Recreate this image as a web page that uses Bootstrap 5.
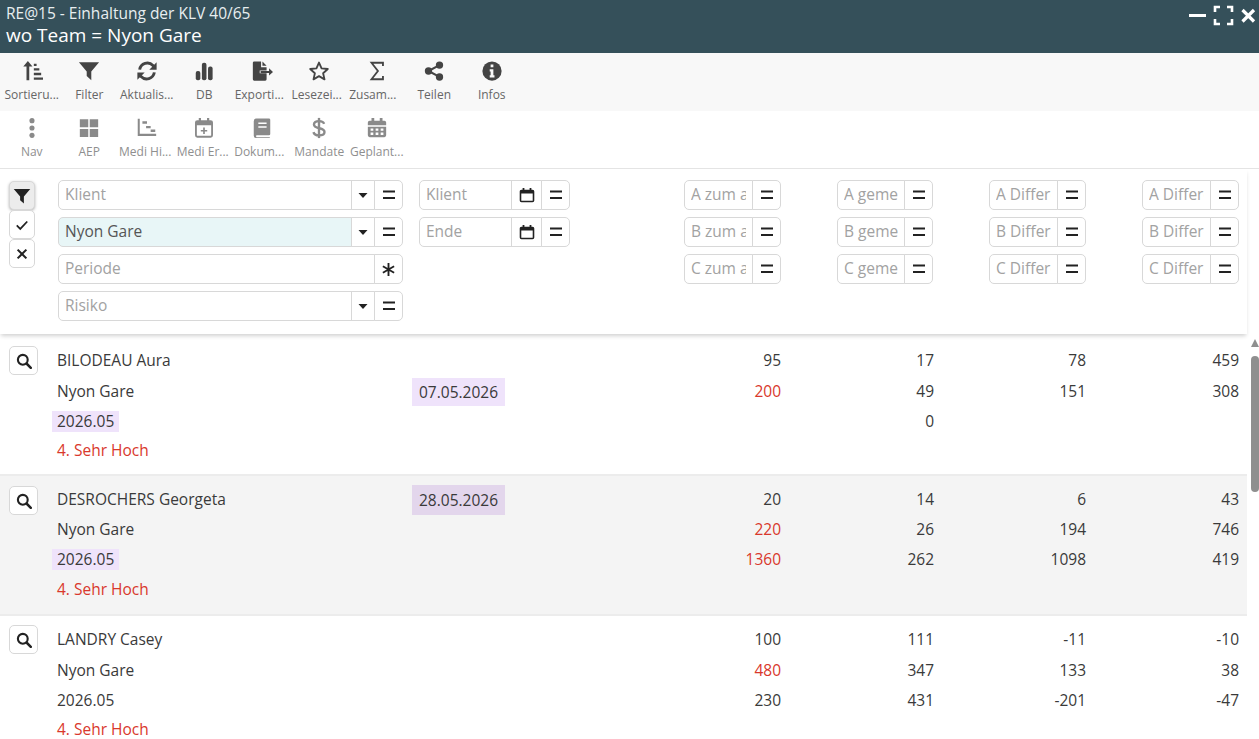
<!DOCTYPE html>
<html lang="de">
<head>
  <meta charset="UTF-8" />
  <meta name="viewport" content="width=device-width, initial-scale=1" />
  <title>RE@15 - Einhaltung der KLV 40/65</title>
  <link href="https://cdn.jsdelivr.net/npm/bootstrap@5.3.3/dist/css/bootstrap.min.css" rel="stylesheet" />
  <style>
    html, body { height: 739px; overflow: hidden; }
    body { font-family: "Open Sans", "Liberation Sans", sans-serif; font-size: 15.5px; color: #3a3a3a; background: #fff; }

    /* title bar */
    .titlebar { height: 53px; background: #35505a; color: #fff; padding: 5px 1px 0 6px; }
    .tb-sub { font-size: 15.5px; line-height: 17px; color: #e8eef0; }
    .tb-main { font-size: 19px; line-height: 26px; }
    .win-btns { color: #fff; }

    /* toolbars */
    .tool-row { height: 58px; padding: 7px 0 0 3px; }
    .tool-one { background: #f8f8f8; color: #444; }
    .tool-two { background: #fff; color: #8a8a8a; height: 58px; border-bottom: 1px solid #e4e4e4; padding-top: 6px; }
    .tool-item { width: 57.5px; flex: none; text-align: center; }
    .tool-item svg { display: block; margin: 0 auto; width: 22px; height: 22px; }
    .tool-lbl { font-size: 12px; line-height: 16px; margin: 5px -4px 0; white-space: nowrap; }
    .tool-two .tool-lbl { color: #8f8f8f; }
    .tool-one .tool-lbl { color: #666; }
    .tool-lbl.lft-1 { margin-left: -5.5px; margin-right: -2.5px; }
    .tool-lbl.lft-2 { margin-left: -6.5px; margin-right: -1.5px; }
    .tool-lbl.lft-4 { margin-left: -8px; margin-right: 0; }

    /* filter panel */
    .filter-panel { width: 1247px; height: 165px; padding: 11px 0 0 9px; background: #fff; box-shadow: 0 3px 4px -1px rgba(0, 0, 0, .18); position: relative; z-index: 1; }
    .side-btns { width: 26px; margin-right: 23px; padding-top: 1px; }
    .side-btn { width: 26px; height: 29px; display: flex; align-items: center; justify-content: center; background: #fff; border: 1px solid #d8d8d8; border-radius: 5px; color: #222; }
    .side-btn.on { background: #ececec; box-shadow: 0 1px 3px rgba(0, 0, 0, .3); }
    .flt-col { gap: 7px; }
    .flt { height: 30px; flex-wrap: nowrap; }
    .flt .form-control { height: 30px; min-width: 0; padding: 0 6px 2px; font-size: 15.5px; color: #555; border-color: #d8d8d8; border-radius: 5px 0 0 5px; box-shadow: none; }
    .flt .form-control::placeholder { color: #a2a2a2; }
    .flt .form-control.is-set { background: #e8f6f7; }
    .flt-btn { flex: none; width: 29px; height: 30px; padding: 0; display: flex; align-items: center; justify-content: center; background: #fff; border: 1px solid #d8d8d8; margin-left: -1px; color: #222; }
    .flt-btn.narrow { width: 24px; }
    .flt-btn.wide { width: 31px; }
    .flt-btn:last-child { border-radius: 0 5px 5px 0; }
    .col-a { width: 345px; }
    .col-b { width: 151px; margin-left: 16px; }
    .col-n { width: 97px; margin-left: 56px; }
    .col-n.first { margin-left: 114px; }
    .col-n.thin { width: 96px; }
    .num-cell .form-control { flex: 1 1 0; }

    /* list */
    .data-wrap { height: 405px; }
    .data-list { width: 1247px; flex: none; overflow: hidden; }
    .data-row { display: grid; grid-template-columns: 57px 362px 151px 211px 153px 152px 153px; grid-template-rows: 33px 30px 30px 28px; padding: 10px 0 0; height: 142px; border-bottom: 2px solid #ececec; align-items: center; }
    .data-row.shade { background: #f4f4f4; height: 140px; padding-top: 9px; grid-template-rows: repeat(4, 30px); }
    .data-row.last { border-bottom: 0; padding-top: 7px; height: 130px; }
    .data-row > .r { text-align: right; }
    .red-txt { color: #d9382c; }
    .search-cell { grid-row: 1 / span 4; align-self: start; padding: 2px 0 0 9px; }
    .shade .search-cell { padding-top: 1px; }
    .search-btn { width: 29px; height: 29px; display: flex; align-items: center; justify-content: center; background: #fff; border: 1px solid #d8d8d8; border-radius: 5px; color: #222; }
    .hl { display: inline-block; background: #efe3fb; line-height: 21px; padding: 0 5px; margin-left: -5px; }
    .hl-date { line-height: 28px; padding: 0 7px; margin-left: -7px; }
    .shade .hl-date { background: #e3d6ec; line-height: 30px; }
    .scroll-col { width: 12px; padding: 5px 0 0 4px; }
    .scroll-up { width: 0; height: 0; border-left: 4px solid transparent; border-right: 4px solid transparent; border-bottom: 8px solid #8f8f8f; margin-bottom: 9px; }
    .scroll-thumb { width: 8px; height: 136px; background: #8f8f8f; border-radius: 4px; }
  </style>
</head>
<body>

  <!-- ICONS -->
  <svg width="0" height="0" class="d-block" aria-hidden="true">
    <symbol id="i-eq" viewBox="0 0 16 16"><path d="M2 4.500h12M2 11h12" stroke="currentColor" stroke-width="2" fill="none"/></symbol>
    <symbol id="i-caret" viewBox="0 0 16 16"><path d="M3.500 6h9L8 11z" fill="currentColor"/></symbol>
    <symbol id="i-cal" viewBox="0 0 16 16"><path d="M2.500 3.500h11a1 1 0 0 1 1 1v9a1 1 0 0 1-1 1h-11a1 1 0 0 1-1-1v-9a1 1 0 0 1 1-1z" fill="none" stroke="currentColor" stroke-width="1.600"/><path d="M1.500 3.500h13V6.500h-13z" fill="currentColor"/><path d="M4.500 1v3M11.500 1v3" stroke="currentColor" stroke-width="1.800"/></symbol>
    <symbol id="i-search" viewBox="0 0 16 16"><circle cx="6.800" cy="6.800" r="4.900" fill="none" stroke="currentColor" stroke-width="2.100"/><path d="M10.500 10.500l4.300 4.300" stroke="currentColor" stroke-width="2.500" stroke-linecap="round"/></symbol>
    <symbol id="i-filter" viewBox="0 0 24 24"><path d="M1 2.500h22l-8.500 10v9.500l-5-4.500v-5z" fill="currentColor"/></symbol>
  </svg>

  <!-- TITLE -->
  <header class="titlebar d-flex justify-content-between">
    <div>
      <div class="tb-sub">RE@15 - Einhaltung der KLV 40/65</div>
      <div class="tb-main">wo Team = Nyon Gare</div>
    </div>
    <div class="win-btns d-flex align-items-start">
      <svg width="70" height="22" viewBox="0 0 70 22" fill="none" stroke="currentColor">
        <path d="M1 10.500h17" stroke-width="3"/>
        <path d="M27 7V2h5M39 2h5v5M44 14v5h-5M32 19h-5v-5" stroke-width="2.600"/>
        <path d="M54.500 5l11.500 11.500M66 5L54.500 16.500" stroke-width="3.200"/>
      </svg>
    </div>
  </header>

  <!-- TOOLBAR 1 -->
  <div class="tool-row tool-one d-flex">
    <div class="tool-item">
      <svg viewBox="0 0 24 24" fill="currentColor"><path d="M6 22V7H2.500L7.500 1l5 6H9v15z"/><path d="M14 4h3v2.500h-3zM14 9h6v2.500h-6zM14 14h8v2.500h-8zM14 19h10v2.500H14z"/></svg>
      <div class="tool-lbl">Sortieru...</div>
    </div>
    <div class="tool-item">
      <svg><use href="#i-filter"/></svg>
      <div class="tool-lbl">Filter</div>
    </div>
    <div class="tool-item">
      <svg viewBox="0 0 24 24" fill="none" stroke="currentColor" stroke-width="3.200"><path d="M4 10.500a8.500 8.500 0 0 1 14.500-4.500l2 2"/><path d="M20 13.500a8.500 8.500 0 0 1-14.500 4.500l-2-2"/><path d="M22.500 2.500v8h-8z" fill="currentColor" stroke="none"/><path d="M1.500 21.500v-8h8z" fill="currentColor" stroke="none"/></svg>
      <div class="tool-lbl">Aktualis...</div>
    </div>
    <div class="tool-item">
      <svg viewBox="0 0 24 24" fill="currentColor"><rect x="3" y="12" width="5" height="10" rx="2.200"/><rect x="9.700" y="3" width="5" height="19" rx="2.200"/><rect x="16.400" y="7" width="5" height="15" rx="2.200"/></svg>
      <div class="tool-lbl">DB</div>
    </div>
    <div class="tool-item">
      <svg viewBox="0 0 24 24" fill="currentColor"><path d="M2 3a1.500 1.500 0 0 1 1.500-1.500H11V8h6v3.500H9.500v3H17V21a1.500 1.500 0 0 1-1.500 1.500h-12A1.500 1.500 0 0 1 2 21z"/><path d="M12.500 1.500L17 6.200h-4.500z"/><path d="M10.500 11.900h9.200V9l4.300 4-4.300 4v-2.900h-9.200z"/></svg>
      <div class="tool-lbl lft-2">Exporti...</div>
    </div>
    <div class="tool-item">
      <svg viewBox="0 0 24 24" fill="none" stroke="currentColor" stroke-width="2"><path d="M12 2.800l2.800 6.300 6.800.7-5.100 4.600 1.500 6.700-6-3.500-6 3.500 1.500-6.700-5.100-4.600 6.800-.7z" stroke-linejoin="round"/></svg>
      <div class="tool-lbl lft-2">Lesezei...</div>
    </div>
    <div class="tool-item">
      <svg viewBox="0 0 24 24" fill="none" stroke="currentColor" stroke-width="2"><path d="M18.500 6.500V3H6l7 9-7 9h12.500v-3.500"/></svg>
      <div class="tool-lbl lft-4">Zusam...</div>
    </div>
    <div class="tool-item">
      <svg viewBox="0 0 24 24" fill="currentColor"><circle cx="18" cy="5.500" r="4"/><circle cx="18" cy="18.500" r="4"/><circle cx="6" cy="12" r="4"/><path d="M6 12l12-6.500M6 12l12 6.500" stroke="currentColor" stroke-width="2.200"/></svg>
      <div class="tool-lbl">Teilen</div>
    </div>
    <div class="tool-item">
      <svg viewBox="0 0 24 24"><circle cx="12" cy="12" r="10.500" fill="currentColor"/><path d="M10.500 5h3v3h-3zM9.500 10h4v6.500h1.200V19H9.500v-2.500h1V12.500h-1z" fill="#f8f8f8"/></svg>
      <div class="tool-lbl">Infos</div>
    </div>
  </div>

  <!-- TOOLBAR 2 -->
  <div class="tool-row tool-two d-flex">
    <div class="tool-item">
      <svg viewBox="0 0 24 24" fill="currentColor"><circle cx="12" cy="4" r="2.800"/><circle cx="12" cy="12" r="2.800"/><circle cx="12" cy="20" r="2.800"/></svg>
      <div class="tool-lbl">Nav</div>
    </div>
    <div class="tool-item">
      <svg viewBox="0 0 24 24" fill="currentColor"><path d="M2 2.500h9.200v8.800H2zM12.800 2.500H22v8.800h-9.200zM2 13h9.200v8.800H2zM12.800 13H22v8.800h-9.200z"/></svg>
      <div class="tool-lbl">AEP</div>
    </div>
    <div class="tool-item">
      <svg viewBox="0 0 24 24" fill="none" stroke="currentColor"><path d="M3 2v17.500h19" stroke-width="2.200"/><path d="M7 6h5M11 11h5M16 15h5" stroke-width="2.600"/></svg>
      <div class="tool-lbl lft-1">Medi Hi...</div>
    </div>
    <div class="tool-item">
      <svg viewBox="0 0 24 24" fill="none" stroke="currentColor"><rect x="3.200" y="4.500" width="17.600" height="17" rx="1.500" stroke-width="2"/><path d="M3 5h18v4H3z" fill="currentColor" stroke="none"/><path d="M7.500 1v5M16.500 1v5" stroke-width="2.400"/><path d="M12 11.500v7M8.500 15h7" stroke-width="1.800"/></svg>
      <div class="tool-lbl lft-1">Medi Er...</div>
    </div>
    <div class="tool-item">
      <svg viewBox="0 0 24 24" fill="currentColor"><path d="M6 1.500h13.500a1.500 1.500 0 0 1 1.500 1.500v15.500a1.500 1.500 0 0 1-1.500 1.500H6a1.500 1.500 0 0 0 0 2h14.500v1H5.500A2.500 2.500 0 0 1 3 20.500V4.500a3 3 0 0 1 3-3z"/><path d="M8 6h9v1.600H8zM8 10h9v1.600H8z" fill="#fff"/></svg>
      <div class="tool-lbl lft-2">Dokum...</div>
    </div>
    <div class="tool-item">
      <svg viewBox="0 0 24 24" fill="none" stroke="currentColor" stroke-width="2.600"><path d="M17.500 7.500C17 5.500 15 4.500 12 4.500c-3.500 0-5.500 1.500-5.500 3.800 0 5.500 11.500 2.500 11.500 8 0 2.300-2.500 3.700-6 3.700-3.300 0-5.500-1.200-6-3.500"/><path d="M12 1v22"/></svg>
      <div class="tool-lbl">Mandate</div>
    </div>
    <div class="tool-item">
      <svg viewBox="0 0 24 24" fill="currentColor"><path d="M4 4h16a2 2 0 0 1 2 2v3H2V6a2 2 0 0 1 2-2zM6 1h3v4H6zM15 1h3v4h-3z"/><path fill-rule="evenodd" d="M2 10.500h20V20a2 2 0 0 1-2 2H4a2 2 0 0 1-2-2zM5 12.500v2.500h3v-2.500zM10.500 12.500v2.500h3v-2.500zM16 12.500v2.500h3v-2.500zM5 17v2.500h3V17zM10.500 17v2.500h3V17zM16 17v2.500h3V17z"/></svg>
      <div class="tool-lbl">Geplant...</div>
    </div>
  </div>

  <!-- FILTERS -->
  <section class="filter-panel d-flex">
    <div class="side-btns d-flex flex-column">
      <div class="side-btn on"><svg width="18" height="18"><use href="#i-filter"/></svg></div>
      <div class="side-btn"><svg width="14" height="14" viewBox="0 0 16 16" fill="none" stroke="currentColor" stroke-width="2"><path d="M2 8.500l4 4 8-8.500"/></svg></div>
      <div class="side-btn"><svg width="14" height="14" viewBox="0 0 16 16" fill="none" stroke="currentColor" stroke-width="2.400"><path d="M3 3l10 10M13 3L3 13"/></svg></div>
    </div>

    <div class="col-a flt-col d-flex flex-column">
      <div class="input-group flt"><input class="form-control" placeholder="Klient" /><div class="flt-btn narrow"><svg width="16" height="16"><use href="#i-caret"/></svg></div><div class="flt-btn"><svg width="16" height="16"><use href="#i-eq"/></svg></div></div>
      <div class="input-group flt"><input class="form-control is-set" value="Nyon Gare" /><div class="flt-btn narrow"><svg width="16" height="16"><use href="#i-caret"/></svg></div><div class="flt-btn"><svg width="16" height="16"><use href="#i-eq"/></svg></div></div>
      <div class="input-group flt"><input class="form-control" placeholder="Periode" /><div class="flt-btn"><svg width="15" height="15" viewBox="0 0 16 16" stroke="currentColor" stroke-width="2"><path d="M8 1v14M2 4.500l12 7M14 4.500l-12 7"/></svg></div></div>
      <div class="input-group flt"><input class="form-control" placeholder="Risiko" /><div class="flt-btn narrow"><svg width="16" height="16"><use href="#i-caret"/></svg></div><div class="flt-btn"><svg width="16" height="16"><use href="#i-eq"/></svg></div></div>
    </div>

    <div class="col-b flt-col d-flex flex-column">
      <div class="input-group flt"><input class="form-control" placeholder="Klient" /><div class="flt-btn wide"><svg width="16" height="16"><use href="#i-cal"/></svg></div><div class="flt-btn"><svg width="16" height="16"><use href="#i-eq"/></svg></div></div>
      <div class="input-group flt"><input class="form-control" placeholder="Ende" /><div class="flt-btn wide"><svg width="16" height="16"><use href="#i-cal"/></svg></div><div class="flt-btn"><svg width="16" height="16"><use href="#i-eq"/></svg></div></div>
    </div>

    <div class="col-n first flt-col num-cell d-flex flex-column">
      <div class="input-group flt"><input class="form-control" placeholder="A zum abgerechnet" /><div class="flt-btn"><svg width="16" height="16"><use href="#i-eq"/></svg></div></div>
      <div class="input-group flt"><input class="form-control" placeholder="B zum abgerechnet" /><div class="flt-btn"><svg width="16" height="16"><use href="#i-eq"/></svg></div></div>
      <div class="input-group flt"><input class="form-control" placeholder="C zum abgerechnet" /><div class="flt-btn"><svg width="16" height="16"><use href="#i-eq"/></svg></div></div>
    </div>
    <div class="col-n thin flt-col num-cell d-flex flex-column">
      <div class="input-group flt"><input class="form-control" placeholder="A gemeldet" /><div class="flt-btn"><svg width="16" height="16"><use href="#i-eq"/></svg></div></div>
      <div class="input-group flt"><input class="form-control" placeholder="B gemeldet" /><div class="flt-btn"><svg width="16" height="16"><use href="#i-eq"/></svg></div></div>
      <div class="input-group flt"><input class="form-control" placeholder="C gemeldet" /><div class="flt-btn"><svg width="16" height="16"><use href="#i-eq"/></svg></div></div>
    </div>
    <div class="col-n flt-col num-cell d-flex flex-column">
      <div class="input-group flt"><input class="form-control" placeholder="A Differenz" /><div class="flt-btn"><svg width="16" height="16"><use href="#i-eq"/></svg></div></div>
      <div class="input-group flt"><input class="form-control" placeholder="B Differenz" /><div class="flt-btn"><svg width="16" height="16"><use href="#i-eq"/></svg></div></div>
      <div class="input-group flt"><input class="form-control" placeholder="C Differenz" /><div class="flt-btn"><svg width="16" height="16"><use href="#i-eq"/></svg></div></div>
    </div>
    <div class="col-n flt-col num-cell d-flex flex-column">
      <div class="input-group flt"><input class="form-control" placeholder="A Differenz" /><div class="flt-btn"><svg width="16" height="16"><use href="#i-eq"/></svg></div></div>
      <div class="input-group flt"><input class="form-control" placeholder="B Differenz" /><div class="flt-btn"><svg width="16" height="16"><use href="#i-eq"/></svg></div></div>
      <div class="input-group flt"><input class="form-control" placeholder="C Differenz" /><div class="flt-btn"><svg width="16" height="16"><use href="#i-eq"/></svg></div></div>
    </div>
  </section>

  <!-- LIST -->
  <div class="data-wrap d-flex">
    <div class="data-list">

      <div class="data-row">
        <div class="search-cell"><div class="search-btn"><svg width="16" height="16"><use href="#i-search"/></svg></div></div>
        <div>BILODEAU Aura</div><div></div><div class="r">95</div><div class="r">17</div><div class="r">78</div><div class="r">459</div>
        <div>Nyon Gare</div><div><span class="hl hl-date">07.05.2026</span></div><div class="r red-txt">200</div><div class="r">49</div><div class="r">151</div><div class="r">308</div>
        <div><span class="hl">2026.05</span></div><div></div><div></div><div class="r">0</div><div></div><div></div>
        <div class="red-txt">4. Sehr Hoch</div>
      </div>

      <div class="data-row shade">
        <div class="search-cell"><div class="search-btn"><svg width="16" height="16"><use href="#i-search"/></svg></div></div>
        <div>DESROCHERS Georgeta</div><div><span class="hl hl-date">28.05.2026</span></div><div class="r">20</div><div class="r">14</div><div class="r">6</div><div class="r">43</div>
        <div>Nyon Gare</div><div></div><div class="r red-txt">220</div><div class="r">26</div><div class="r">194</div><div class="r">746</div>
        <div><span class="hl">2026.05</span></div><div></div><div class="r red-txt">1360</div><div class="r">262</div><div class="r">1098</div><div class="r">419</div>
        <div class="red-txt">4. Sehr Hoch</div>
      </div>

      <div class="data-row last">
        <div class="search-cell"><div class="search-btn"><svg width="16" height="16"><use href="#i-search"/></svg></div></div>
        <div>LANDRY Casey</div><div></div><div class="r">100</div><div class="r">111</div><div class="r">-11</div><div class="r">-10</div>
        <div>Nyon Gare</div><div></div><div class="r red-txt">480</div><div class="r">347</div><div class="r">133</div><div class="r">38</div>
        <div>2026.05</div><div></div><div class="r">230</div><div class="r">431</div><div class="r">-201</div><div class="r">-47</div>
        <div class="red-txt">4. Sehr Hoch</div>
      </div>

    </div>
    <div class="scroll-col">
      <div class="scroll-up"></div>
      <div class="scroll-thumb"></div>
    </div>
  </div>

  <script src="https://cdn.jsdelivr.net/npm/bootstrap@5.3.3/dist/js/bootstrap.bundle.min.js"></script>
</body>
</html>
